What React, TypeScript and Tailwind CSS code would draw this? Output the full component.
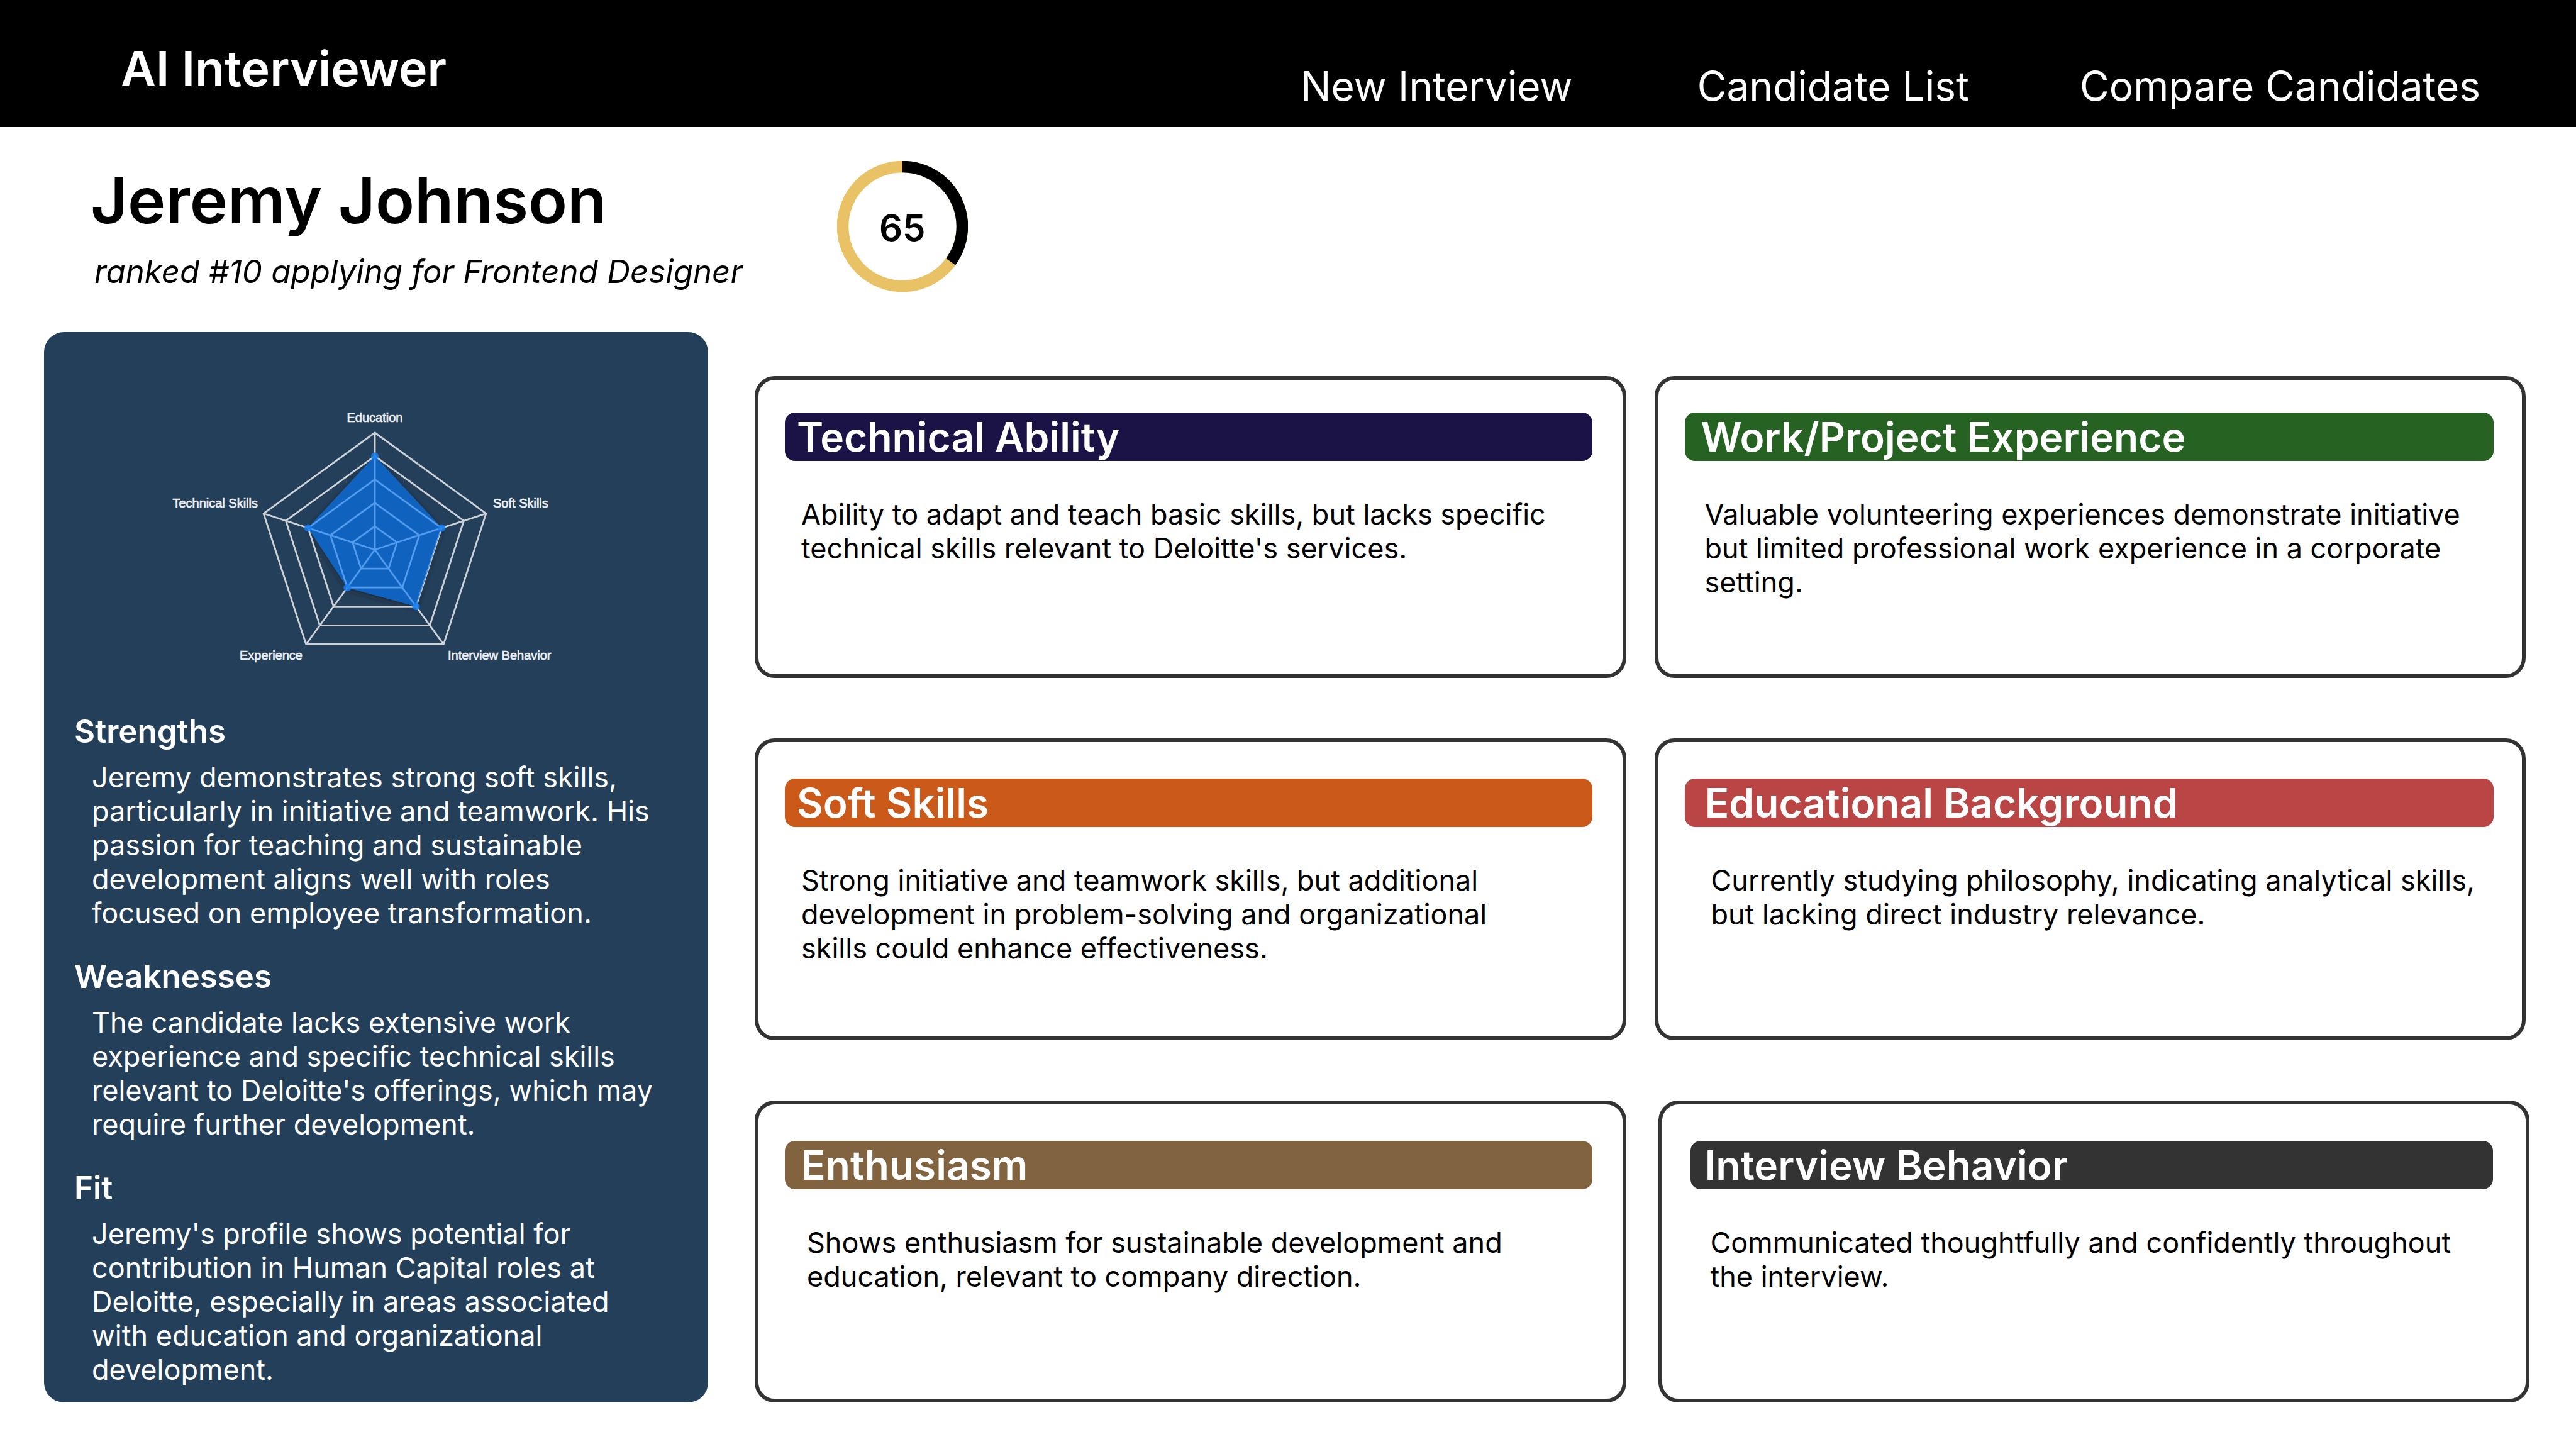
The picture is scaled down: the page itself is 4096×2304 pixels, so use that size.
const NAV_LINKS = [
  { label: "New Interview", spacing: "" },
  { label: "Candidate List", spacing: "ml-[198px]" },
  { label: "Compare Candidates", spacing: "ml-[176px]" },
];

const SUMMARY = [
  {
    title: "Strengths",
    text: "Jeremy demonstrates strong soft skills, particularly in initiative and teamwork. His passion for teaching and sustainable development aligns well with roles focused on employee transformation.",
  },
  {
    title: "Weaknesses",
    text: "The candidate lacks extensive work experience and specific technical skills relevant to Deloitte's offerings, which may require further development.",
  },
  {
    title: "Fit",
    text: "Jeremy's profile shows potential for contribution in Human Capital roles at Deloitte, especially in areas associated with education and organizational development.",
  },
];

type Category = {
  title: string;
  text: string;
  card: string;
  bar: string;
  body: string;
};

const ROWS: { layout: string; categories: Category[] }[] = [
  {
    layout: "gap-[45px] pr-[80px]",
    categories: [
      {
        title: "Technical Ability",
        text: "Ability to adapt and teach basic skills, but lacks specific technical skills relevant to Deloitte's services.",
        card: "pt-[52px] pl-[42px] pr-[48px]",
        bar: "bg-[#1b1346] pl-[19px]",
        body: "pl-[26px] max-w-[1214px]",
      },
      {
        title: "Work/Project Experience",
        text: "Valuable volunteering experiences demonstrate initiative but limited professional work experience in a corporate setting.",
        card: "pt-[52px] pl-[42px] pr-[45px]",
        bar: "bg-[#266323] pl-[26px]",
        body: "pl-[32px]",
      },
    ],
  },
  {
    layout: "gap-[45px] pr-[80px]",
    categories: [
      {
        title: "Soft Skills",
        text: "Strong initiative and teamwork skills, but additional development in problem-solving and organizational skills could enhance effectiveness.",
        card: "pt-[58px] pl-[42px] pr-[48px]",
        bar: "bg-[#cb5a1a] pl-[19px]",
        body: "pl-[26px] max-w-[1214px]",
      },
      {
        title: "Educational Background",
        text: "Currently studying philosophy, indicating analytical skills, but lacking direct industry relevance.",
        card: "pt-[58px] pl-[42px] pr-[45px]",
        bar: "bg-[#ba4545] pl-[32px]",
        body: "pl-[42px]",
      },
    ],
  },
  {
    layout: "gap-[51px] pr-[74px]",
    categories: [
      {
        title: "Enthusiasm",
        text: "Shows enthusiasm for sustainable development and education, relevant to company direction.",
        card: "pt-[58px] pl-[42px] pr-[48px]",
        bar: "bg-[#82633f] pl-[26px]",
        body: "pl-[35px]",
      },
      {
        title: "Interview Behavior",
        text: "Communicated thoughtfully and confidently throughout the interview.",
        card: "pt-[58px] pl-[45px] pr-[52px]",
        bar: "bg-[#333333] pl-[23px]",
        body: "pl-[32px]",
      },
    ],
  },
];

const SCORE = 65;

function ScoreRing() {
  const radius = 95;
  const circumference = 2 * Math.PI * radius;
  const rest = (circumference * (100 - SCORE)) / 100;
  return (
    <div className="relative flex size-[208px] items-center justify-center">
      <svg className="absolute inset-0 size-full" viewBox="0 0 208 208" aria-hidden="true">
        <circle cx="104" cy="104" r={radius} fill="none" stroke="#e8c264" strokeWidth="18.5" />
        <circle
          cx="104"
          cy="104"
          r={radius}
          fill="none"
          stroke="#000"
          strokeWidth="18.5"
          strokeDasharray={`${rest} ${circumference}`}
          transform="rotate(-90 104 104)"
        />
      </svg>
      <span className="relative pt-1 text-[58px] leading-[70px] font-semibold">{SCORE}</span>
    </div>
  );
}

const CENTER = { x: 526, y: 346 };
const RADIUS = 186;
const VALUES = [0.8, 0.6, 0.6, 0.4, 0.6];

function vertex(axis: number, share: number) {
  const angle = (axis * 2 * Math.PI) / 5 - Math.PI / 2;
  return {
    x: CENTER.x + Math.cos(angle) * RADIUS * share,
    y: CENTER.y + Math.sin(angle) * RADIUS * share,
  };
}

function ring(shares: number[]) {
  return shares
    .map((share, axis) => {
      const p = vertex(axis, share);
      return `${p.x},${p.y}`;
    })
    .join(" ");
}

function GridLines() {
  return (
    <>
      {[0.2, 0.4, 0.6, 0.8, 1].map((share) => (
        <polygon key={share} points={ring([share, share, share, share, share])} />
      ))}
      {VALUES.map((_, axis) => {
        const p = vertex(axis, 1);
        return <line key={axis} x1={CENTER.x} y1={CENTER.y} x2={p.x} y2={p.y} />;
      })}
    </>
  );
}

function SkillsRadar() {
  return (
    <svg className="h-auto w-full" viewBox="0 0 1056 604" role="img" aria-label="Skills radar chart">
      <defs>
        <filter id="area-shadow" x="-20%" y="-20%" width="140%" height="140%">
          <feDropShadow dx="0" dy="3" stdDeviation="4" floodColor="#222" floodOpacity="0.6" />
        </filter>
        <clipPath id="area-clip">
          <polygon points={ring(VALUES)} />
        </clipPath>
      </defs>
      <polygon points={ring(VALUES)} fill="#0f62bd" filter="url(#area-shadow)" />
      <g fill="none" stroke="#ccd2d8" strokeWidth="2.8">
        <GridLines />
      </g>
      <polygon points={ring(VALUES)} fill="#0f62bd" />
      <g fill="none" stroke="#529bee" strokeWidth="2.8" clipPath="url(#area-clip)">
        <GridLines />
      </g>
      {VALUES.map((share, axis) => {
        const p = vertex(axis, share);
        return <circle key={axis} cx={p.x} cy={p.y} r="6" fill="#147df0" fillOpacity="0.85" />;
      })}
      <g
        fill="#eceff2"
        stroke="#eceff2"
        strokeWidth="0.7"
        fontFamily="'Liberation Sans', Arial, sans-serif"
        fontSize="20"
      >
        <text x="526" y="143" textAnchor="middle">Education</text>
        <text x="714" y="279">Soft Skills</text>
        <text x="642" y="521">Interview Behavior</text>
        <text x="411" y="521" textAnchor="end">Experience</text>
        <text x="340" y="279" textAnchor="end">Technical Skills</text>
      </g>
    </svg>
  );
}

function CategoryCard({ category }: { category: Category }) {
  return (
    <article
      className={`min-h-[480px] rounded-[32px] border-[6px] border-[#333333] bg-white pb-[40px] ${category.card}`}
    >
      <h3
        className={`rounded-[16px] text-[64px] leading-[77px] font-semibold text-white ${category.bar}`}
      >
        {category.title}
      </h3>
      <p className={`mt-[58px] text-[45px] leading-[54px] ${category.body}`}>{category.text}</p>
    </article>
  );
}

export default function App() {
  return (
    <div className="min-h-screen bg-white font-['Inter',sans-serif] text-black">
      <header className="flex items-start justify-between bg-black pt-[63px] pr-[152px] pb-[27px] pl-[192px] text-white">
        <h1 className="text-[77px] leading-[93px] font-semibold">AI Interviewer</h1>
        <nav className="mt-[35px] flex text-[64px] leading-[77px]">
          {NAV_LINKS.map((link) => (
            <a key={link.label} href="#" className={link.spacing}>
              {link.label}
            </a>
          ))}
        </nav>
      </header>

      <section className="flex items-start gap-[150px] pt-[54px] pb-[64px] pl-[144px]">
        <div>
          <h2 className="text-[102px] leading-[124px] font-semibold">Jeremy Johnson</h2>
          <p className="mt-[21px] pl-[6px] text-[51px] leading-[62px] italic">
            ranked #10 applying for Frontend Designer
          </p>
        </div>
        <ScoreRing />
      </section>

      <main className="grid grid-cols-[1056fr_2896fr] gap-[74px] pb-[74px] pl-[70px]">
        <aside className="rounded-[32px] bg-[#243f5a] text-white">
          <SkillsRadar />
          <div className="flex flex-col gap-[43px] pb-[24px] pl-[48px]">
            {SUMMARY.map((item) => (
              <section key={item.title}>
                <h3 className="text-[51px] leading-[62px] font-semibold">{item.title}</h3>
                <p className="mt-[15px] ml-[28px] max-w-[896px] text-[45px] leading-[54px]">
                  {item.text}
                </p>
              </section>
            ))}
          </div>
        </aside>

        <div className="flex flex-col gap-[96px] pt-[70px]">
          {ROWS.map((row) => (
            <div key={row.categories[0].title} className={`grid grid-cols-2 ${row.layout}`}>
              {row.categories.map((category) => (
                <CategoryCard key={category.title} category={category} />
              ))}
            </div>
          ))}
        </div>
      </main>
    </div>
  );
}
